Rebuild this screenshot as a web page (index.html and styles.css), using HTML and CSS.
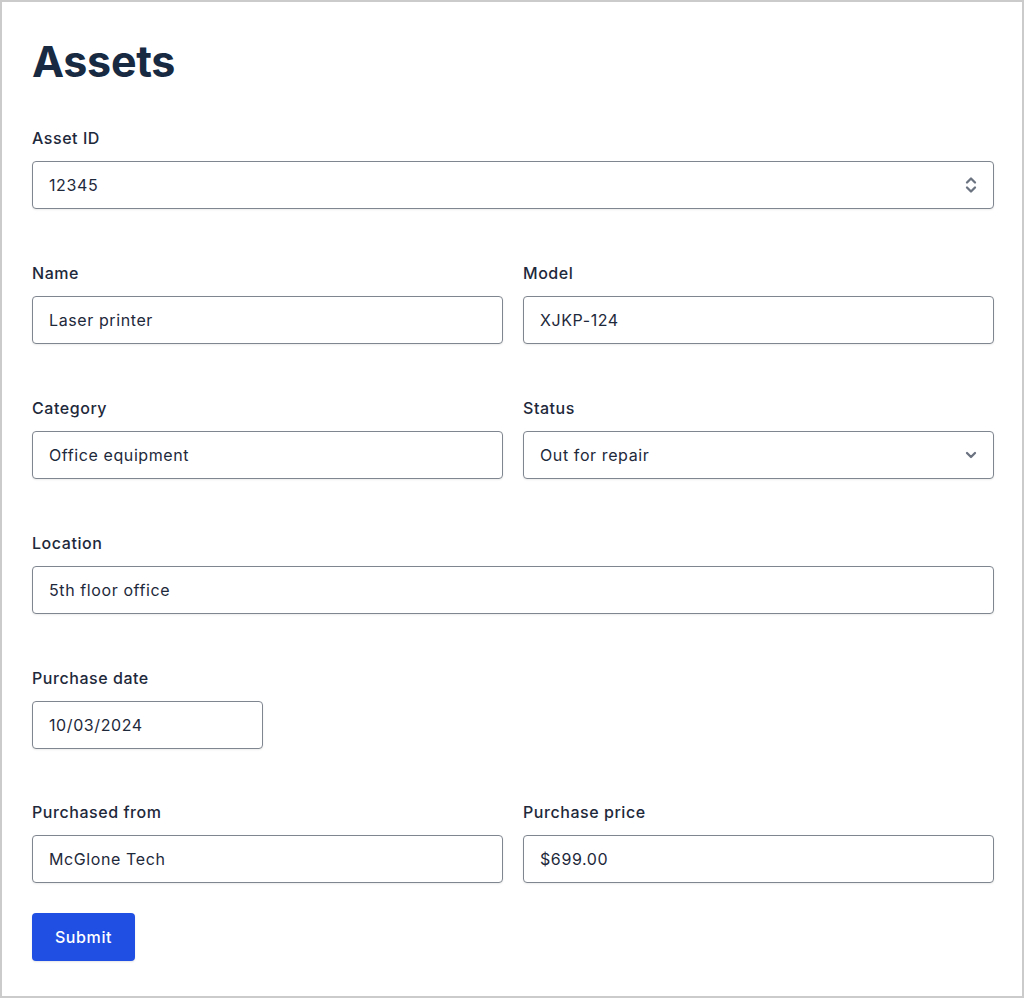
FILE: index.html
```html
<!DOCTYPE html>
<html lang="en">
<head>
<meta charset="utf-8">
<title>Assets</title>
<link rel="stylesheet" href="styles.css">
</head>
<body>
<div class="frame">
  <form class="form">
    <h1 class="title">Assets</h1>

    <div class="row">
      <div class="field">
        <label class="label">Asset ID</label>
        <div class="control">
          <span class="value">12345</span>
          <svg class="icon" width="14" height="20" viewBox="0 0 14 20" fill="none" stroke="#6b7280" stroke-width="2.3" stroke-linecap="round" stroke-linejoin="round"><path d="M3 7.5 7 3.5 11 7.5"/><path d="M3 12.5 7 16.5 11 12.5"/></svg>
        </div>
      </div>
    </div>

    <div class="row two">
      <div class="field">
        <label class="label">Name</label>
        <div class="control"><span class="value">Laser printer</span></div>
      </div>
      <div class="field">
        <label class="label">Model</label>
        <div class="control"><span class="value">XJKP-124</span></div>
      </div>
    </div>

    <div class="row two">
      <div class="field">
        <label class="label">Category</label>
        <div class="control"><span class="value">Office equipment</span></div>
      </div>
      <div class="field">
        <label class="label">Status</label>
        <div class="control">
          <span class="value">Out for repair</span>
          <svg class="icon" width="14" height="20" viewBox="0 0 14 20" fill="none" stroke="#6b7280" stroke-width="2.3" stroke-linecap="round" stroke-linejoin="round"><path d="M3 8 7 12 11 8"/></svg>
        </div>
      </div>
    </div>

    <div class="row">
      <div class="field">
        <label class="label">Location</label>
        <div class="control"><span class="value">5th floor office</span></div>
      </div>
    </div>

    <div class="row tight">
      <div class="field">
        <label class="label">Purchase date</label>
        <div class="control date"><span class="value">10/03/2024</span></div>
      </div>
    </div>

    <div class="row two last">
      <div class="field">
        <label class="label">Purchased from</label>
        <div class="control"><span class="value">McGlone Tech</span></div>
      </div>
      <div class="field">
        <label class="label">Purchase price</label>
        <div class="control"><span class="value">$699.00</span></div>
      </div>
    </div>

    <button type="button" class="submit">Submit</button>
  </form>
</div>
</body>
</html>
```

FILE: styles.css
```css
* { box-sizing: border-box; }

html, body {
  margin: 0;
  padding: 0;
  background: #ffffff;
}

body {
  font-family: Inter, "Noto Sans", "Liberation Sans", sans-serif;
  color: #1e293b;
}

.frame {
  width: 1024px;
  height: 998px;
  border: 2px solid #cbcbcb;
  padding: 33px 28px 0 30px;
}

.form {
  width: 962px;
  display: flex;
  flex-direction: column;
}

.title {
  margin: 0 0 38px 0;
  font-size: 43px;
  line-height: 53px;
  font-weight: 700;
  color: #172a42;
  letter-spacing: -0.3px;
}

.row {
  display: grid;
  grid-template-columns: 1fr;
  margin-bottom: 52px;
}

.row.two {
  grid-template-columns: 1fr 1fr;
  column-gap: 20px;
}

.row.tight {
  margin-bottom: 51px;
}

.row.last {
  margin-bottom: 30px;
}

.field {
  display: flex;
  flex-direction: column;
}

.label {
  font-size: 16px;
  line-height: 24px;
  font-weight: 500;
  color: #1e293b;
  letter-spacing: 0.55px;
  margin-bottom: 11px;
}

.control {
  height: 48px;
  border: 1px solid #80868f;
  border-radius: 4px;
  box-shadow: 0 1px 2px rgba(0, 0, 0, 0.08);
  padding: 0 15px 0 16px;
  display: flex;
  align-items: center;
  justify-content: space-between;
  background: #fff;
}

.control.date {
  width: 231px;
}

.value {
  font-size: 16px;
  line-height: 24px;
  color: #1e293b;
  letter-spacing: 0.6px;
}

.icon {
  flex: none;
}

.submit {
  align-self: flex-start;
  width: 103px;
  height: 48px;
  border: none;
  border-radius: 4px;
  background: #1f4fe3;
  color: #ffffff;
  font-family: Inter, "Noto Sans", "Liberation Sans", sans-serif;
  font-size: 16px;
  font-weight: 500;
  letter-spacing: 0.6px;
  box-shadow: 0 1px 2px rgba(0, 0, 0, 0.1);
  padding: 0;
}
```
